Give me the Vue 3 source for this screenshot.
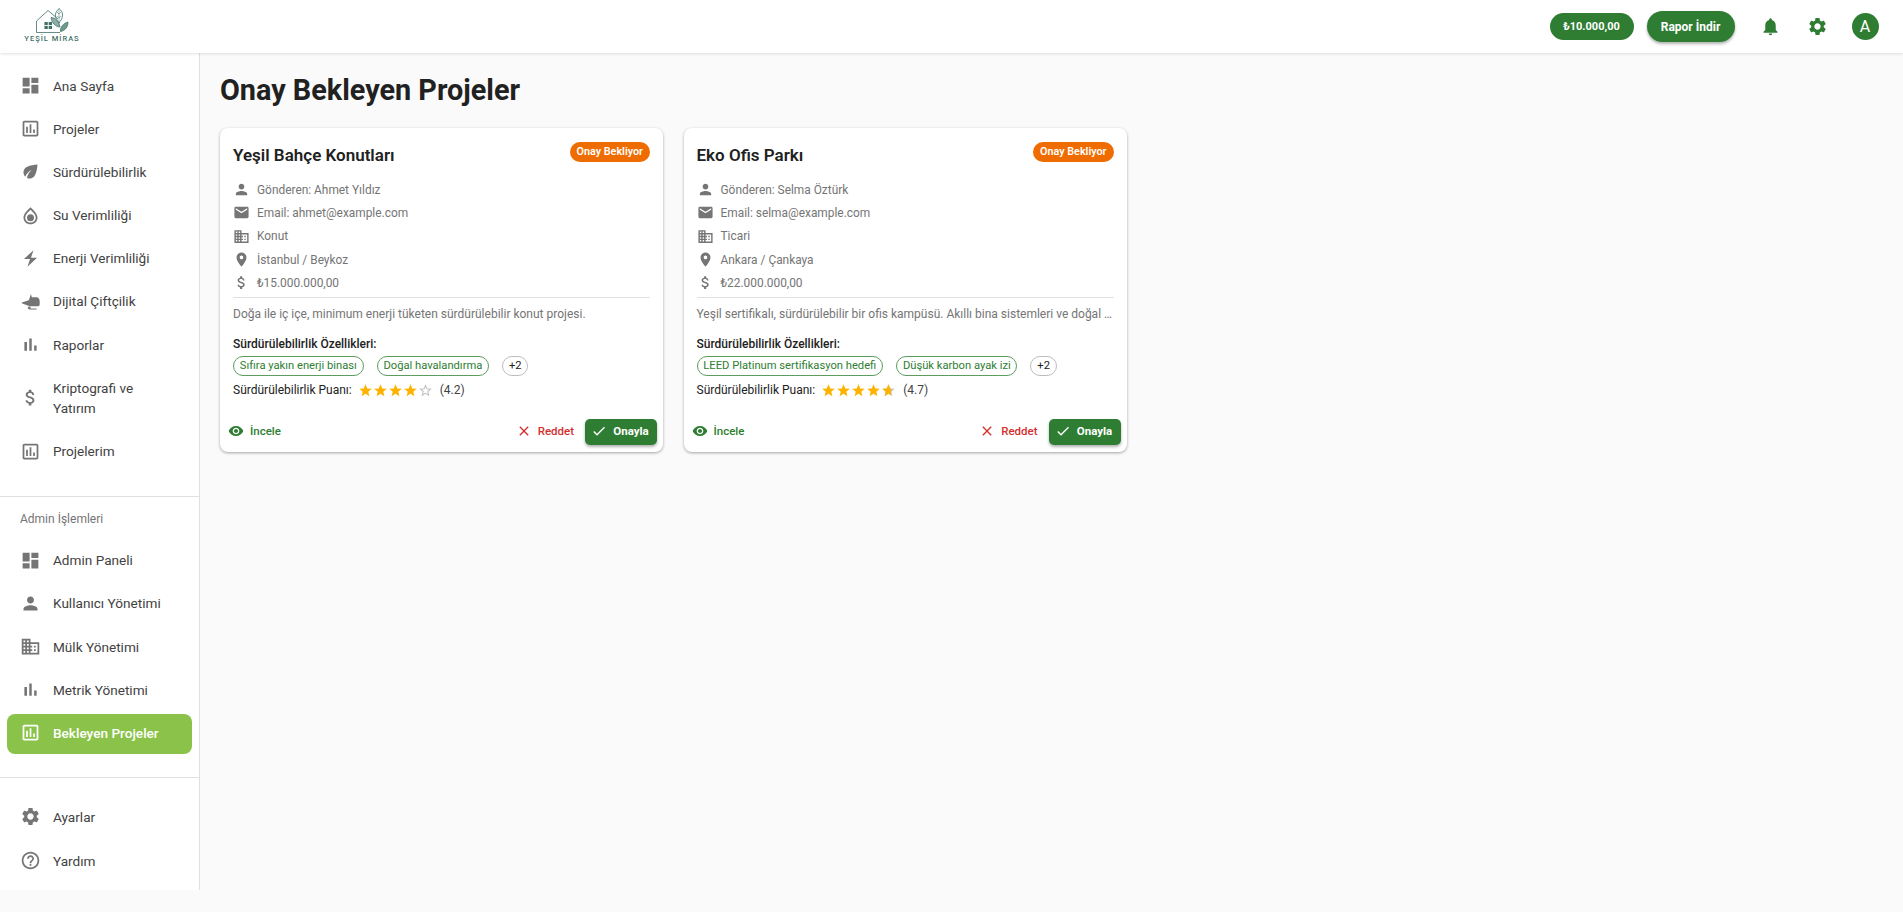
<template>
  <div class="page">
    <header class="topbar">
      <div class="logo">
        <svg class="logo-mark" viewBox="36 8 33 26" fill="none" stroke="#3f7068" stroke-width="0.8">
          <path d="M36.500 32.500V21L48 10.500 58 19" />
          <path d="M36.500 32.500H60" />
          <rect x="44.500" y="22" width="7.500" height="7" fill="#3f7068" stroke="none" />
          <path d="M44.500 25.500h7.500M48.250 22v7" stroke="#fff" stroke-width="0.9" />
          <path d="M59 8.500c2.500 2 4 4.500 3.500 7.500-.4 2.800-2 5-3.500 7-1.500-2-3.200-4.200-3.500-7-.3-3 1-5.500 3.500-7z" />
          <path d="M59 10v15M59 14l2-2M59 14l-2-2M59 18l2-2M59 18l-2-2" stroke-width="0.5" />
          <path d="M51 17.500c4 .2 7.500 3 9 9.500-4.500-.5-8-3.500-9-9.500z" fill="#8fb0a8" />
          <path d="M60.500 31.500c-.2-4.500 2.500-8 7.500-9.500 0 4.500-2.500 8.500-7.500 9.500z" fill="#6f9a8f" />
        </svg>
        <span class="logo-text">YEŞİL MİRAS</span>
      </div>
      <div class="top-actions">
        <span class="balance">₺10.000,00</span>
        <button class="report">Rapor İndir</button>
        <svg class="top-icon bell" viewBox="0 0 24 24"><path :d="icons.bell" /></svg>
        <svg class="top-icon gear" viewBox="0 0 24 24"><path :d="icons.settings" /></svg>
        <span class="avatar">A</span>
      </div>
    </header>

    <div class="body">
      <aside class="sidebar">
        <nav class="nav first">
          <a v-for="item in mainNav" :key="item.label" class="nav-item">
            <svg viewBox="0 0 24 24"><path :d="icons[item.icon]" /></svg>
            <span>{{ item.label }}</span>
          </a>
        </nav>
        <div class="divider"></div>
        <div class="nav-title">Admin İşlemleri</div>
        <nav class="nav">
          <a
            v-for="item in adminNav"
            :key="item.label"
            :class="['nav-item', { active: item.active }]"
          >
            <svg viewBox="0 0 24 24"><path :d="icons[item.icon]" /></svg>
            <span>{{ item.label }}</span>
          </a>
        </nav>
        <div class="divider"></div>
        <nav class="nav last">
          <a v-for="item in bottomNav" :key="item.label" class="nav-item">
            <svg viewBox="0 0 24 24"><path :d="icons[item.icon]" /></svg>
            <span>{{ item.label }}</span>
          </a>
        </nav>
      </aside>

      <main class="content">
        <h1>Onay Bekleyen Projeler</h1>
        <div class="cards">
          <article v-for="p in projects" :key="p.title" class="card">
            <div class="card-head">
              <h2>{{ p.title }}</h2>
              <span class="badge">Onay Bekliyor</span>
            </div>
            <ul class="meta">
              <li v-for="m in p.meta" :key="m.icon">
                <svg viewBox="0 0 24 24"><path :d="icons[m.icon]" /></svg>
                <span>{{ m.text }}</span>
              </li>
            </ul>
            <p class="desc">{{ p.desc }}</p>
            <div class="feat-title">Sürdürülebilirlik Özellikleri:</div>
            <div class="chips">
              <span v-for="c in p.chips" :key="c" class="chip">{{ c }}</span>
              <span class="chip more">+2</span>
            </div>
            <div class="score">
              <span>Sürdürülebilirlik Puanı:</span>
              <span class="stars">
                <svg v-for="n in 5" :key="n" viewBox="0 0 24 24">
                  <path v-if="n <= p.full" :d="icons.star" />
                  <template v-else-if="p.partial && n === p.full + 1">
                    <path class="under" :d="icons.star" />
                    <path :d="icons.starPart" />
                  </template>
                  <path v-else class="empty" :d="icons.starBorder" />
                </svg>
              </span>
              <span class="score-num">({{ p.score }})</span>
            </div>
            <div class="actions">
              <button class="act view">
                <svg viewBox="0 0 24 24"><path :d="icons.eye" /></svg>İncele
              </button>
              <div class="act-right">
                <button class="act reject">
                  <svg viewBox="0 0 24 24"><path :d="icons.close" /></svg>Reddet
                </button>
                <button class="act approve">
                  <svg viewBox="0 0 24 24"><path :d="icons.check" /></svg>Onayla
                </button>
              </div>
            </div>
          </article>
        </div>
      </main>
    </div>
  </div>
</template>

<script setup>
const icons = {
  dashboard: "M3 13h8V3H3v10zm0 8h8v-6H3v6zm10 0h8V11h-8v10zm0-18v6h8V3h-8z",
  assessment: "M19 3H5c-1.100 0-2 .9-2 2v14c0 1.100.9 2 2 2h14c1.100 0 2-.9 2-2V5c0-1.100-.9-2-2-2zm0 16H5V5h14v14zM7 10h2v7H7zm4-3h2v10h-2zm4 6h2v4h-2z",
  eco: "M6.050 8.050c-2.730 2.730-2.730 7.150-.02 9.880 1.470-3.400 4.090-6.240 7.360-7.930-2.770 2.340-4.710 5.610-5.390 9.320 2.600 1.230 5.800.78 7.950-1.370C19.430 14.470 20 4 20 4S9.530 4.570 6.050 8.050z",
  water: "M12 2.500C8 6.500 4 10 4 14.500 4 18.600 7.600 22 12 22s8-3.400 8-7.500C20 10 16 6.500 12 2.500zM12 5.500C9 8.500 6 11 6 14.500 6 17.500 8.700 20 12 20s6-2.500 6-5.500C18 11 15 8.500 12 5.500zM12 10.500a4 4 0 1 0 0 8 4 4 0 0 0 0-8z",
  bolt: "M15.500 2.500L4.500 12.500h7L8.500 21.500l11-10.500h-7z",
  drone: "M2 13l8-2.500L11 8l1.500-4.500 1 3.500H19c2 0 3.500 2 3.500 4.500v4c0 1-1 2-2 2H11L2 14zM9 18h3v2h7v1H11l-2-1z",
  bars: "M5 9.200h3V19H5zM10.600 5h2.800v14h-2.800zm5.600 8H19v6h-2.800z",
  money: "M11.800 10.900c-2.270-.59-3-1.200-3-2.150 0-1.090 1.010-1.850 2.700-1.850 1.780 0 2.440.85 2.500 2.100h2.210c-.07-1.720-1.120-3.300-3.210-3.810V3h-3v2.160c-1.940.42-3.500 1.680-3.500 3.610 0 2.310 1.910 3.460 4.700 4.130 2.500.6 3 1.480 3 2.410 0 .69-.49 1.790-2.700 1.790-2.060 0-2.870-.92-2.980-2.100h-2.200c.12 2.190 1.760 3.420 3.680 3.830V21h3v-2.150c1.950-.37 3.500-1.500 3.500-3.550 0-2.840-2.430-3.810-4.700-4.400z",
  person: "M12 12c2.210 0 4-1.790 4-4s-1.790-4-4-4-4 1.790-4 4 1.790 4 4 4zm0 2c-2.670 0-8 1.340-8 4v2h16v-2c0-2.660-5.330-4-8-4z",
  business: "M12 7V3H2v18h20V7H12zM6 19H4v-2h2v2zm0-4H4v-2h2v2zm0-4H4V9h2v2zm0-4H4V5h2v2zm4 12H8v-2h2v2zm0-4H8v-2h2v2zm0-4H8V9h2v2zm0-4H8V5h2v2zm10 12h-8v-2h2v-2h-2v-2h2v-2h-2V9h8v10zm-2-8h-2v2h2v-2zm0 4h-2v2h2v-2z",
  settings: "M19.140 12.940c.04-.3.06-.61.06-.94 0-.32-.02-.64-.07-.94l2.030-1.580c.18-.14.23-.41.12-.61l-1.920-3.320c-.12-.22-.37-.29-.59-.22l-2.390.96c-.5-.38-1.030-.7-1.620-.94l-.36-2.540c-.04-.24-.24-.41-.48-.41h-3.840c-.24 0-.43.17-.47.41l-.36 2.540c-.59.24-1.130.57-1.620.94l-2.390-.96c-.22-.08-.47 0-.59.22L2.740 8.870c-.12.21-.08.47.12.61l2.030 1.580c-.05.3-.09.63-.09.94s.02.64.07.94l-2.030 1.580c-.18.14-.23.41-.12.61l1.920 3.320c.12.22.37.29.59.22l2.390-.96c.5.38 1.030.7 1.620.94l.36 2.540c.05.24.24.41.48.41h3.840c.24 0 .44-.17.47-.41l.36-2.540c.59-.24 1.130-.56 1.620-.94l2.390.96c.22.08.47 0 .59-.22l1.920-3.320c.12-.22.07-.47-.12-.61l-2.010-1.580zM12 15.600c-1.980 0-3.600-1.620-3.600-3.600s1.620-3.600 3.600-3.600 3.600 1.620 3.600 3.600-1.620 3.600-3.600 3.600z",
  help: "M11 18h2v-2h-2v2zm1-16C6.480 2 2 6.480 2 12s4.480 10 10 10 10-4.480 10-10S17.520 2 12 2zm0 18c-4.410 0-8-3.590-8-8s3.590-8 8-8 8 3.590 8 8-3.590 8-8 8zm0-14c-2.210 0-4 1.790-4 4h2c0-1.100.9-2 2-2s2 .9 2 2c0 2-3 1.750-3 5h2c0-2.250 3-2.500 3-5 0-2.210-1.790-4-4-4z",
  email: "M20 4H4c-1.100 0-1.990.9-1.990 2L2 18c0 1.100.9 2 2 2h16c1.100 0 2-.9 2-2V6c0-1.100-.9-2-2-2zm0 4l-8 5-8-5V6l8 5 8-5v2z",
  place: "M12 2C8.130 2 5 5.130 5 9c0 5.250 7 13 7 13s7-7.750 7-13c0-3.870-3.130-7-7-7zm0 9.500c-1.380 0-2.500-1.120-2.500-2.500s1.120-2.500 2.500-2.500 2.500 1.120 2.500 2.500-1.120 2.500-2.500 2.500z",
  bell: "M12 22c1.100 0 2-.9 2-2h-4c0 1.100.89 2 2 2zm6-6v-5c0-3.070-1.640-5.640-4.500-6.320V4c0-.83-.67-1.500-1.500-1.500s-1.500.67-1.500 1.500v.68C7.630 5.360 6 7.920 6 11v5l-2 2v1h16v-1l-2-2z",
  eye: "M12 4.500C7 4.500 2.730 7.610 1 12c1.730 4.390 6 7.500 11 7.500s9.270-3.110 11-7.500c-1.730-4.390-6-7.500-11-7.500zM12 17c-2.760 0-5-2.240-5-5s2.240-5 5-5 5 2.240 5 5-2.240 5-5 5zm0-8c-1.660 0-3 1.340-3 3s1.340 3 3 3 3-1.340 3-3-1.340-3-3-3z",
  close: "M19 6.410L17.590 5 12 10.590 6.410 5 5 6.410 10.590 12 5 17.590 6.410 19 12 13.410 17.590 19 19 17.590 13.410 12z",
  check: "M9 16.170L4.830 12l-1.420 1.410L9 19 21 7l-1.410-1.410z",
  star: "M12 17.270L18.180 21l-1.640-7.030L22 9.240l-7.190-.61L12 2 9.190 8.630 2 9.240l5.460 4.730L5.820 21z",
  starBorder: "M22 9.240l-7.190-.62L12 2 9.190 8.630 2 9.240l5.460 4.730L5.820 21 12 17.270 18.180 21l-1.630-7.030L22 9.240zM12 15.400l-3.760 2.270 1-4.280-3.320-2.880 4.380-.38L12 6.100l1.710 4.040 4.380.38-3.320 2.880 1 4.280L12 15.400z",
  starPart: "M12 2l2.810 6.630L16 8.730V19.680l-4-2.410L5.820 21l1.640-7.030L2 9.240l7.190-.61z",
};

const mainNav = [
  { label: "Ana Sayfa", icon: "dashboard" },
  { label: "Projeler", icon: "assessment" },
  { label: "Sürdürülebilirlik", icon: "eco" },
  { label: "Su Verimliliği", icon: "water" },
  { label: "Enerji Verimliliği", icon: "bolt" },
  { label: "Dijital Çiftçilik", icon: "drone" },
  { label: "Raporlar", icon: "bars" },
  { label: "Kriptografi ve Yatırım", icon: "money" },
  { label: "Projelerim", icon: "assessment" },
];

const adminNav = [
  { label: "Admin Paneli", icon: "dashboard" },
  { label: "Kullanıcı Yönetimi", icon: "person" },
  { label: "Mülk Yönetimi", icon: "business" },
  { label: "Metrik Yönetimi", icon: "bars" },
  { label: "Bekleyen Projeler", icon: "assessment", active: true },
];

const bottomNav = [
  { label: "Ayarlar", icon: "settings" },
  { label: "Yardım", icon: "help" },
];

const projects = [
  {
    title: "Yeşil Bahçe Konutları",
    meta: [
      { icon: "person", text: "Gönderen: Ahmet Yıldız" },
      { icon: "email", text: "Email: ahmet@example.com" },
      { icon: "business", text: "Konut" },
      { icon: "place", text: "İstanbul / Beykoz" },
      { icon: "money", text: "₺15.000.000,00" },
    ],
    desc: "Doğa ile iç içe, minimum enerji tüketen sürdürülebilir konut projesi.",
    chips: ["Sıfıra yakın enerji binası", "Doğal havalandırma"],
    full: 4,
    partial: false,
    score: "4.2",
  },
  {
    title: "Eko Ofis Parkı",
    meta: [
      { icon: "person", text: "Gönderen: Selma Öztürk" },
      { icon: "email", text: "Email: selma@example.com" },
      { icon: "business", text: "Ticari" },
      { icon: "place", text: "Ankara / Çankaya" },
      { icon: "money", text: "₺22.000.000,00" },
    ],
    desc: "Yeşil sertifikalı, sürdürülebilir bir ofis kampüsü. Akıllı bina sistemleri ve doğal …",
    chips: ["LEED Platinum sertifikasyon hedefi", "Düşük karbon ayak izi"],
    full: 4,
    partial: true,
    score: "4.7",
  },
];
</script>

<style>
html,
body {
  margin: 0;
  background: #fafafa;
}
</style>

<style scoped>
.page {
  height: 912px;
  overflow: hidden;
  font-family: Roboto, "Liberation Sans", sans-serif;
  background: #fafafa;
}

button {
  font-family: inherit;
  border: none;
  background: none;
  cursor: pointer;
}

.topbar {
  height: 53px;
  background: #fff;
  box-shadow: 0 1px 3px rgba(0, 0, 0, 0.12);
  display: flex;
  align-items: center;
  justify-content: space-between;
  padding: 0 24.5px 0 24px;
  position: relative;
  z-index: 2;
}

.logo {
  display: flex;
  flex-direction: column;
  align-items: center;
  width: 56px;
  margin-top: -2px;
}

.logo-mark {
  width: 33px;
  height: 26px;
}

.logo-text {
  font-size: 7.5px;
  font-weight: 500;
  letter-spacing: 1px;
  color: #3f7068;
  white-space: nowrap;
  line-height: 9px;
}

.top-actions {
  display: flex;
  align-items: center;
}

.balance {
  background: #2e7d32;
  color: #fff;
  font-size: 11px;
  font-weight: 700;
  height: 27px;
  width: 84px;
  border-radius: 14px;
  display: flex;
  align-items: center;
  justify-content: center;
}

.report {
  background: #2e7d32;
  color: #fff;
  font-size: 12px;
  font-weight: 700;
  height: 31px;
  width: 88px;
  border-radius: 16px;
  margin-left: 13px;
  box-shadow: 0 2px 3px rgba(0, 0, 0, 0.3);
}

.top-icon {
  width: 21px;
  height: 21px;
  fill: #2e7d32;
}

.bell {
  margin-left: 25px;
}

.gear {
  margin-left: 26px;
}

.avatar {
  width: 27px;
  height: 27px;
  border-radius: 50%;
  background: #2e7d32;
  color: #fff;
  font-size: 16px;
  font-weight: 400;
  display: flex;
  align-items: center;
  justify-content: center;
  margin-left: 24px;
}

.body {
  display: flex;
  align-items: flex-start;
}

.sidebar {
  width: 199px;
  height: 837px;
  background: #fff;
  border-right: 1px solid #e0e0e0;
  flex-shrink: 0;
}

.nav {
  display: flex;
  flex-direction: column;
  gap: 3.2px;
}

.nav.first {
  padding-top: 13.5px;
}

.nav-item {
  min-height: 40px;
  margin: 0 7px;
  padding: 9px 16px 11px 12.5px;
  display: flex;
  align-items: center;
  border-radius: 8px;
  font-size: 13.6px;
  line-height: 20px;
  color: #424242;
  box-sizing: border-box;
}

.nav-item svg {
  width: 21px;
  height: 21px;
  flex-shrink: 0;
  fill: #757575;
  fill-rule: evenodd;
  margin: -1px 12.5px -1px 0;
}

.nav-item.active {
  background: #8bc34a;
  color: #fff;
  font-weight: 500;
}

.nav-item.active svg {
  fill: #fff;
}

.divider {
  height: 1px;
  background: #e0e0e0;
  margin-top: 23.5px;
}

.nav-title {
  font-size: 12px;
  color: #757575;
  padding: 14px 0 0 20px;
  height: 30.7px;
  line-height: 16px;
}

.nav.last {
  padding-top: 19.5px;
  gap: 4px;
}

.content {
  flex: 1;
  padding: 20px;
  min-width: 0;
}

h1 {
  margin: 0 0 20px;
  font-size: 28.8px;
  font-weight: 700;
  line-height: 35px;
  color: #212121;
}

.cards {
  display: grid;
  grid-template-columns: repeat(2, 443px);
  gap: 20.5px;
}

.card {
  background: #fff;
  border-radius: 8px;
  box-shadow: 0 1px 3px rgba(0, 0, 0, 0.35);
  padding: 14px 6px 7px;
  height: 324px;
  box-sizing: border-box;
  display: flex;
  flex-direction: column;
}

.card-head {
  display: flex;
  justify-content: space-between;
  align-items: flex-start;
  margin: 0 7px 10px;
}

h2 {
  margin: 0;
  font-size: 17px;
  font-weight: 600;
  line-height: 26px;
  color: #212121;
}

.badge {
  background: #ef6c00;
  color: #fff;
  font-size: 10.8px;
  font-weight: 600;
  height: 20px;
  line-height: 20px;
  padding: 0 7px;
  border-radius: 10px;
  white-space: nowrap;
}

.meta {
  list-style: none;
  margin: 0 7px;
  padding: 0 0 3px;
  border-bottom: 1px solid #e0e0e0;
}

.meta li {
  height: 23.3px;
  display: flex;
  align-items: center;
  font-size: 11.9px;
  color: #757575;
}

.meta svg {
  width: 17px;
  height: 17px;
  fill: #757575;
  margin-right: 7px;
  flex-shrink: 0;
}

.desc {
  margin: 8px 7px 0;
  font-size: 12px;
  line-height: 16px;
  color: #757575;
  white-space: nowrap;
}

.feat-title {
  margin: 14px 7px 0;
  font-size: 12px;
  font-weight: 500;
  line-height: 16px;
  color: #212121;
}

.chips {
  display: flex;
  gap: 13px;
  margin: 4px 7px 0;
}

.chip {
  height: 20px;
  box-sizing: border-box;
  border: 1px solid #5c9c60;
  border-radius: 10px;
  padding: 0 5.8px;
  font-size: 11.2px;
  line-height: 18px;
  color: #2e7d32;
  white-space: nowrap;
}

.chip.more {
  border-color: #bdbdbd;
  color: #212121;
}

.score {
  display: flex;
  align-items: center;
  margin: 6px 7px 0;
  font-size: 12px;
  line-height: 16px;
  color: #212121;
}

.stars {
  display: flex;
  margin: 0 7px 0 6px;
}

.stars svg {
  width: 15px;
  height: 15px;
  fill: #ffb300;
}

.stars .empty {
  fill: #bdbdbd;
}

.stars .under {
  fill: #c4c4c4;
}

.score-num {
  color: #424242;
}

.actions {
  margin-top: auto;
  display: flex;
  align-items: center;
  justify-content: space-between;
}

.act-right {
  display: flex;
  align-items: center;
  gap: 6px;
}

.act {
  display: flex;
  align-items: center;
  height: 26px;
  font-size: 11.5px;
  font-weight: 500;
}

.act svg {
  width: 16px;
  height: 16px;
  margin-right: 6px;
}

.view {
  color: #2e7d32;
  padding: 0 4px 2px 2px;
}

.view svg {
  fill: #2e7d32;
}

.reject {
  color: #d32f2f;
  padding: 0 5px 2px;
}

.reject svg {
  fill: #d32f2f;
}

.approve {
  background: #2e7d32;
  color: #fff;
  font-weight: 700;
  width: 72px;
  padding: 0 2px 2px 0;
  justify-content: center;
  border-radius: 5px;
  box-shadow: 0 2px 3px rgba(0, 0, 0, 0.3);
}

.approve svg {
  fill: #fff;
}
</style>
